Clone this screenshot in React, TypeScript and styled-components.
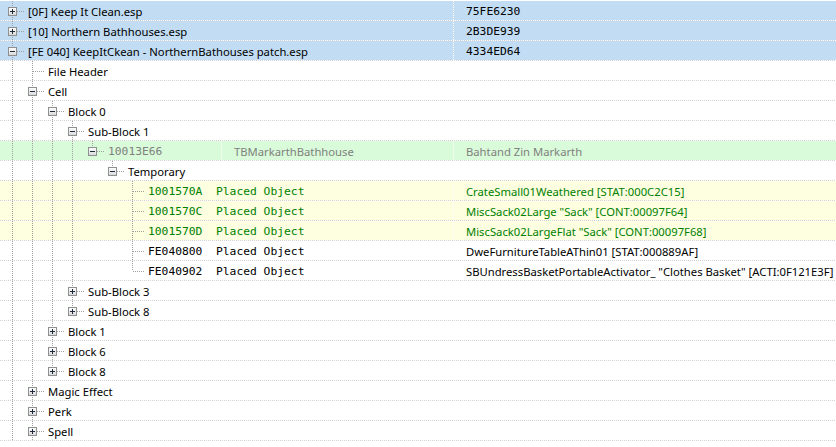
import React, { FC } from 'react'
import styled, { createGlobalStyle, css } from 'styled-components'

type Tone = 'file' | 'cell' | 'ref' | 'plain'

interface Item {
  level: number
  label: string
  mono?: boolean
  toggle?: 'plus' | 'minus'
  last?: boolean
  tone?: Tone
  editorId?: string
  value?: string
  monoValue?: boolean
}

const items: Item[] = [
  { level: 0, label: '[0F] Keep It Clean.esp', toggle: 'plus', tone: 'file', value: '75FE6230', monoValue: true },
  { level: 0, label: '[10] Northern Bathhouses.esp', toggle: 'plus', tone: 'file', value: '2B3DE939', monoValue: true },
  { level: 0, label: '[FE 040] KeepItCkean - NorthernBathouses patch.esp', toggle: 'minus', tone: 'file', value: '4334ED64', monoValue: true },
  { level: 1, label: 'File Header' },
  { level: 1, label: 'Cell', toggle: 'minus' },
  { level: 2, label: 'Block 0', toggle: 'minus' },
  { level: 3, label: 'Sub-Block 1', toggle: 'minus' },
  { level: 4, label: '10013E66', mono: true, toggle: 'minus', last: true, tone: 'cell', editorId: 'TBMarkarthBathhouse', value: 'Bahtand Zin Markarth' },
  { level: 5, label: 'Temporary', toggle: 'minus', last: true },
  { level: 6, label: '1001570A  Placed Object', mono: true, tone: 'ref', value: 'CrateSmall01Weathered [STAT:000C2C15]' },
  { level: 6, label: '1001570C  Placed Object', mono: true, tone: 'ref', value: 'MiscSack02Large "Sack" [CONT:00097F64]' },
  { level: 6, label: '1001570D  Placed Object', mono: true, tone: 'ref', value: 'MiscSack02LargeFlat "Sack" [CONT:00097F68]' },
  { level: 6, label: 'FE040800  Placed Object', mono: true, value: 'DweFurnitureTableAThin01 [STAT:000889AF]' },
  { level: 6, label: 'FE040902  Placed Object', mono: true, last: true, value: 'SBUndressBasketPortableActivator_ "Clothes Basket" [ACTI:0F121E3F]' },
  { level: 3, label: 'Sub-Block 3', toggle: 'plus' },
  { level: 3, label: 'Sub-Block 8', toggle: 'plus', last: true },
  { level: 2, label: 'Block 1', toggle: 'plus' },
  { level: 2, label: 'Block 6', toggle: 'plus' },
  { level: 2, label: 'Block 8', toggle: 'plus', last: true },
  { level: 1, label: 'Magic Effect', toggle: 'plus' },
  { level: 1, label: 'Perk', toggle: 'plus' },
  { level: 1, label: 'Spell', toggle: 'plus' }
]

const tones = {
  file: { bg: '#c1dcf3', fg: '#000' },
  cell: { bg: '#d9fbd9', fg: '#808080' },
  ref: { bg: '#fefee1', fg: '#008000' },
  plain: { bg: '#fff', fg: '#000' }
}

const GlobalStyle = createGlobalStyle`
  html, body {
    margin: 0;
    background: #fff;
  }
  body {
    font-family: "Noto Sans", "Open Sans", sans-serif;
    font-size: 11.25px;
  }
`

const Tree = styled.div`
  display: flex;
  flex-direction: column;
  padding-top: 1px;
  width: 836px;
  height: 447px;
  overflow: hidden;
`

const Row = styled.div<{ $tone: Tone }>`
  display: grid;
  grid-template-columns: 221px 232px 1fr;
  height: 20px;
  flex: none;
  color: ${p => tones[p.$tone].fg};
  background-color: ${p => tones[p.$tone].bg};
  background-image: linear-gradient(to right, #d2d2d2 50%, #fff 50%);
  background-size: 2px 1px;
  background-repeat: repeat-x;
  background-position: left bottom;
`

const TreeCell = styled.div<{ $split: boolean }>`
  grid-column: ${p => (p.$split ? 'span 1' : 'span 2')};
  display: flex;
  align-items: stretch;
  padding-left: 2px;
  min-width: 0;
  white-space: nowrap;
`

const dots = css`
  content: '';
  position: absolute;
  background-image: linear-gradient(to bottom, #a0a0a0 50%, transparent 50%);
  background-size: 1px 2px;
`

const Indent = styled.span<{ $line: boolean }>`
  position: relative;
  flex: none;
  width: 20px;

  ${p =>
    p.$line &&
    css`
      &::before {
        ${dots};
        left: 10px;
        top: 0;
        bottom: 0;
        width: 1px;
      }
    `}
`

const Connector = styled.span<{ $last: boolean }>`
  position: relative;
  flex: none;
  width: 20px;

  &::before {
    ${dots};
    left: 10px;
    top: 0;
    width: 1px;
    height: ${p => (p.$last ? '10px' : '100%')};
  }

  &::after {
    ${dots};
    left: 11px;
    top: 10px;
    width: 11px;
    height: 1px;
    background-image: linear-gradient(to right, #a0a0a0 50%, transparent 50%);
    background-size: 2px 1px;
  }
`

const ToggleBox = styled.svg`
  position: absolute;
  left: 6px;
  top: 6px;
  z-index: 1;
`

const Label = styled.span<{ $mono?: boolean }>`
  align-self: center;
  margin-left: 6px;
  white-space: pre;
  ${p =>
    p.$mono &&
    css`
      font-family: "DejaVu Sans Mono", "Liberation Mono", monospace;
      font-size: 11.3px;
    `}
`

const Column = styled.div`
  display: flex;
  align-items: center;
  padding-left: 13px;
  white-space: pre;
  min-width: 0;
  background-image: linear-gradient(to bottom, #fff 50%, transparent 50%);
  background-size: 1px 2px;
  background-repeat: repeat-y;
  background-position: left top;
`

const Mono = styled.span`
  font-family: "DejaVu Sans Mono", "Liberation Mono", monospace;
  font-size: 11.3px;
`

const Toggle: FC<{ kind: 'plus' | 'minus' }> = ({ kind }) => (
  <ToggleBox width="9" height="9" viewBox="0 0 9 9">
    <defs>
      <linearGradient id={`tg-${kind}`} x1="0" y1="0" x2="0" y2="1">
        <stop offset="0" stopColor="#ffffff" />
        <stop offset="1" stopColor="#d8d8d8" />
      </linearGradient>
    </defs>
    <rect x="0.5" y="0.5" width="8" height="8" fill={`url(#tg-${kind})`} stroke="#8e8f8f" />
    <path d="M2 4.5h5" stroke="#1c2a3c" />
    {kind === 'plus' && <path d="M4.5 2v5" stroke="#1c2a3c" />}
  </ToggleBox>
)

const App: FC = () => {
  const open: boolean[] = []
  return (
    <>
      <GlobalStyle />
      <Tree>
        {items.map((item, i) => {
          open[item.level] = !item.last
          const guides = open.slice(0, item.level)
          return (
            <Row key={i} $tone={item.tone || 'plain'}>
              <TreeCell $split={!!item.editorId}>
                {guides.map((line, k) => (
                  <Indent key={k} $line={line} />
                ))}
                <Connector $last={!!item.last}>
                  {item.toggle && <Toggle kind={item.toggle} />}
                </Connector>
                <Label $mono={item.mono}>{item.label}</Label>
              </TreeCell>
              {item.editorId && <Column>{item.editorId}</Column>}
              <Column>
                {item.monoValue ? <Mono>{item.value}</Mono> : item.value}
              </Column>
            </Row>
          )
        })}
      </Tree>
    </>
  )
}

export default App
